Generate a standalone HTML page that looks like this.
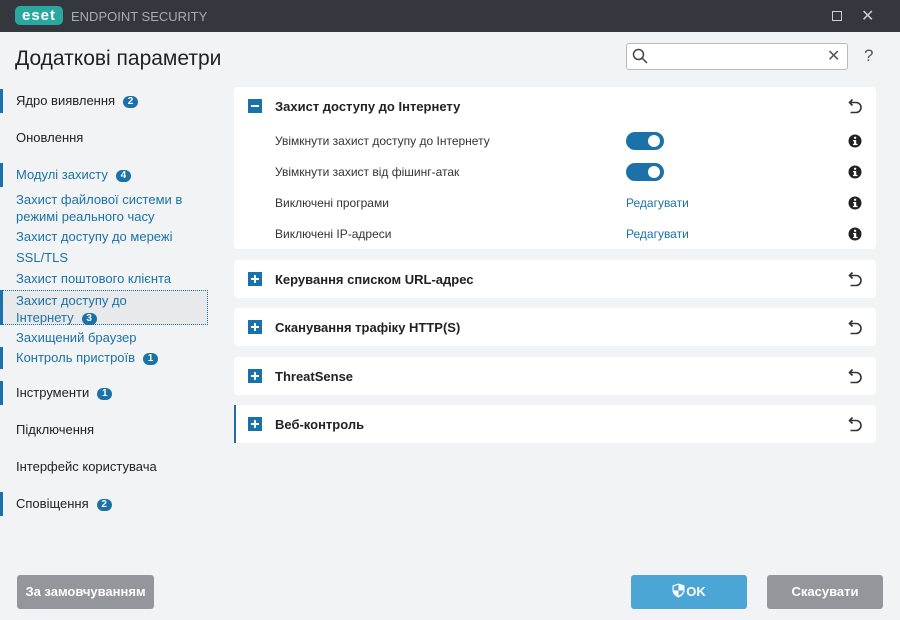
<!DOCTYPE html><html><head><meta charset="utf-8"><style>
*{margin:0;padding:0;box-sizing:border-box}
body{width:900px;height:620px;background:#f2f3f5;font-family:"Liberation Sans","DejaVu Sans",sans-serif;position:relative;overflow:hidden;color:#222}
.tb{position:absolute;left:0;top:0;width:900px;height:32px;background:#34373d}
.a{position:absolute;white-space:nowrap}
.nav{font-size:13px;color:#222}
.sub{font-size:13px;color:#1a72a8}
.bar{position:absolute;left:0;width:3px;background:#1a72a8}
.badge{display:inline-block;background:#1a72a8;color:#fff;font-size:10px;font-weight:bold;border-radius:6px;width:15px;height:12px;line-height:12px;text-align:center;margin-left:8px;vertical-align:1px}
.card{position:absolute;left:234px;width:642px;background:#fff;border-radius:4px}
.pm{position:absolute;left:14px;width:14px;height:14px;background:#1a72a8}
.pm:before{content:"";position:absolute;left:3px;top:6px;width:8px;height:2px;background:#fff}
.pm.p:after{content:"";position:absolute;left:6px;top:3px;width:2px;height:8px;background:#fff}
.ct{position:absolute;left:41px;font-size:13px;font-weight:bold;color:#222}
.lbl{font-size:12px;color:#333}
.tog{position:absolute;left:392px;width:38px;height:18px;border-radius:9px;background:#1a72a8}
.tog:after{content:"";position:absolute;right:4px;top:3px;width:12px;height:12px;border-radius:50%;background:#fff}
.info{position:absolute;left:614px}
.btn{position:absolute;top:575px;height:34px;border-radius:3px;color:#fff;font-size:13px;font-weight:bold;text-align:center;line-height:34px}
</style></head><body>
<div class="tb">
<div class="a" style="left:15px;top:6px;width:48px;height:19px;background:#2aa8a0;border-radius:5px;color:#fff;font-weight:bold;font-size:15px;line-height:19px;text-align:center;letter-spacing:1px">eset</div>
<div class="a" style="left:71px;top:9px;font-size:13px;color:#a9abaf">ENDPOINT SECURITY</div>
<div class="a" style="left:832px;top:11px;width:10px;height:10px;border:1px solid #ccc"></div>
<div class="a" style="left:861px;top:6px;font-size:16px;color:#ccc">✕</div>
</div>
<div class="a" style="left:15px;top:47px;font-size:21px;color:#222">Додаткові параметри</div>
<div class="a" style="left:626px;top:43px;width:222px;height:27px;background:#fff;border:1px solid #bbb;border-radius:3px"></div>
<svg class="a" style="left:632px;top:48px" width="16" height="16"><circle cx="6.5" cy="6.5" r="5" fill="none" stroke="#444" stroke-width="1.5"/><path d="M10 10l5 5" stroke="#444" stroke-width="1.5"/></svg>
<div class="a" style="left:827px;top:46px;font-size:16px;color:#555">✕</div>
<div class="a" style="left:864px;top:46px;font-size:17px;color:#555">?</div>

<div class="bar" style="top:89px;height:24px"></div>
<div class="a nav" style="left:16px;top:93px">Ядро виявлення<span class="badge">2</span></div>
<div class="a nav" style="left:16px;top:130px">Оновлення</div>
<div class="bar" style="top:163px;height:24px"></div>
<div class="a sub" style="left:16px;top:167px">Модулі захисту<span class="badge">4</span></div>
<div class="a sub" style="left:16px;top:191px;line-height:17px">Захист файлової системи в<br>режимі реального часу</div>
<div class="a sub" style="left:16px;top:229px">Захист доступу до мережі</div>
<div class="a sub" style="left:16px;top:250px">SSL/TLS</div>
<div class="a sub" style="left:16px;top:271px">Захист поштового клієнта</div>
<div class="a" style="left:1px;top:290px;width:207px;height:35px;background:#e8e9eb;border:1px dotted #1a72a8"></div>
<div class="bar" style="top:290px;height:35px"></div>
<div class="a sub" style="left:16px;top:292px;line-height:17px">Захист доступу до<br>Інтернету<span class="badge">3</span></div>
<div class="a sub" style="left:16px;top:330px">Захищений браузер</div>
<div class="bar" style="top:347px;height:22px"></div>
<div class="a sub" style="left:16px;top:350px">Контроль пристроїв<span class="badge">1</span></div>
<div class="bar" style="top:381px;height:24px"></div>
<div class="a nav" style="left:16px;top:385px">Інструменти<span class="badge">1</span></div>
<div class="a nav" style="left:16px;top:422px">Підключення</div>
<div class="a nav" style="left:16px;top:459px">Інтерфейс користувача</div>
<div class="bar" style="top:492px;height:24px"></div>
<div class="a nav" style="left:16px;top:496px">Сповіщення<span class="badge">2</span></div>

<div class="card" style="top:87px;height:162px">
<div class="pm" style="top:12px"></div>
<div class="ct" style="top:12px">Захист доступу до Інтернету</div>
<div class="a lbl" style="left:41px;top:47px">Увімкнути захист доступу до Інтернету</div>
<div class="tog" style="top:45px"></div>
<div class="a lbl" style="left:41px;top:78px">Увімкнути захист від фішинг-атак</div>
<div class="tog" style="top:76px"></div>
<div class="a lbl" style="left:41px;top:109px">Виключені програми</div>
<div class="a lbl" style="left:392px;top:109px;color:#1a72a8">Редагувати</div>
<div class="a lbl" style="left:41px;top:140px">Виключені IP-адреси</div>
<div class="a lbl" style="left:392px;top:140px;color:#1a72a8">Редагувати</div>
<svg class="info" style="top:47px" width="14" height="14"><circle cx="7" cy="7" r="6.5" fill="#222"/><rect x="6" y="6" width="2.2" height="5" fill="#fff"/><rect x="5" y="6" width="3" height="1.3" fill="#fff"/><rect x="5" y="9.8" width="4.5" height="1.3" fill="#fff"/><circle cx="7.1" cy="3.8" r="1.2" fill="#fff"/></svg>
<svg class="info" style="top:78px" width="14" height="14"><circle cx="7" cy="7" r="6.5" fill="#222"/><rect x="6" y="6" width="2.2" height="5" fill="#fff"/><rect x="5" y="6" width="3" height="1.3" fill="#fff"/><rect x="5" y="9.8" width="4.5" height="1.3" fill="#fff"/><circle cx="7.1" cy="3.8" r="1.2" fill="#fff"/></svg>
<svg class="info" style="top:109px" width="14" height="14"><circle cx="7" cy="7" r="6.5" fill="#222"/><rect x="6" y="6" width="2.2" height="5" fill="#fff"/><rect x="5" y="6" width="3" height="1.3" fill="#fff"/><rect x="5" y="9.8" width="4.5" height="1.3" fill="#fff"/><circle cx="7.1" cy="3.8" r="1.2" fill="#fff"/></svg>
<svg class="info" style="top:140px" width="14" height="14"><circle cx="7" cy="7" r="6.5" fill="#222"/><rect x="6" y="6" width="2.2" height="5" fill="#fff"/><rect x="5" y="6" width="3" height="1.3" fill="#fff"/><rect x="5" y="9.8" width="4.5" height="1.3" fill="#fff"/><circle cx="7.1" cy="3.8" r="1.2" fill="#fff"/></svg>
</div>

<div class="card" style="top:260px;height:38px"><div class="pm p" style="top:12px"></div><div class="ct" style="top:12px">Керування списком URL-адрес</div></div>
<div class="card" style="top:308px;height:38px"><div class="pm p" style="top:12px"></div><div class="ct" style="top:12px">Сканування трафіку HTTP(S)</div></div>
<div class="card" style="top:357px;height:38px"><div class="pm p" style="top:12px"></div><div class="ct" style="top:12px">ThreatSense</div></div>
<div class="card" style="top:405px;height:38px;border-left:2px solid #1a72a8;border-radius:0 4px 4px 0"><div class="pm p" style="top:12px;left:12px"></div><div class="ct" style="top:12px;left:39px">Веб-контроль</div></div>
<svg class="a" style="left:848px;top:98px" width="14" height="16"><path d="M4.5 1.5L1.5 4.5l3 3M1.5 4.5H8a5 5 0 0 1 0 10H2.5" fill="none" stroke="#333" stroke-width="1.6"/></svg>
<svg class="a" style="left:848px;top:271px" width="14" height="16"><path d="M4.5 1.5L1.5 4.5l3 3M1.5 4.5H8a5 5 0 0 1 0 10H2.5" fill="none" stroke="#333" stroke-width="1.6"/></svg>
<svg class="a" style="left:848px;top:319px" width="14" height="16"><path d="M4.5 1.5L1.5 4.5l3 3M1.5 4.5H8a5 5 0 0 1 0 10H2.5" fill="none" stroke="#333" stroke-width="1.6"/></svg>
<svg class="a" style="left:848px;top:368px" width="14" height="16"><path d="M4.5 1.5L1.5 4.5l3 3M1.5 4.5H8a5 5 0 0 1 0 10H2.5" fill="none" stroke="#333" stroke-width="1.6"/></svg>
<svg class="a" style="left:848px;top:416px" width="14" height="16"><path d="M4.5 1.5L1.5 4.5l3 3M1.5 4.5H8a5 5 0 0 1 0 10H2.5" fill="none" stroke="#333" stroke-width="1.6"/></svg>

<div class="btn" style="left:17px;width:137px;background:#93979c">За замовчуванням</div>
<div class="btn" style="left:631px;width:116px;background:#4ba6d6"><svg width="13" height="15" style="vertical-align:-2px;margin-right:1px"><path d="M6.5 0.5L0.5 2.5v5c0 3 3 6 6 7 3-1 6-4 6-7v-5z" fill="#fff"/><path d="M6.5 7.5h4.8c-0.4 2.3-2.5 4.4-4.8 5.3zM6.5 7.5H1.7V3.4l4.8-1.6z" fill="#4ba6d6"/></svg>OK</div>
<div class="btn" style="left:767px;width:116px;background:#93979c">Скасувати</div>
</body></html>
